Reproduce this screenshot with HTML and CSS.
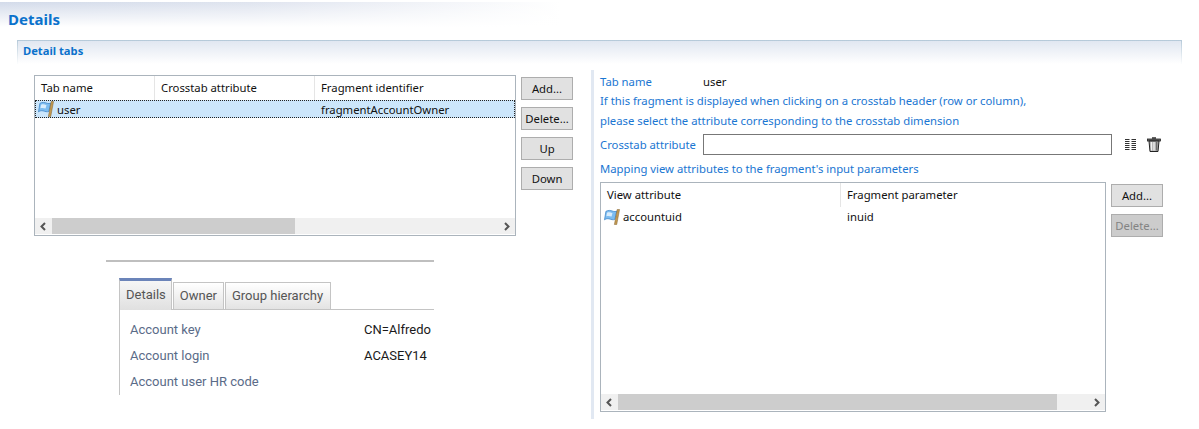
FILE: index.html
```html
<!DOCTYPE html>
<html lang="en">
<head>
<meta charset="utf-8">
<title>Details</title>
<link rel="stylesheet" href="styles.css">
</head>
<body>
<svg class="defs" width="0" height="0" aria-hidden="true">
  <symbol id="flag" viewBox="0 0 18 17">
    <path d="M2 2.5 C4.5 1 7 1.5 9 2.2 C11 3 12.5 2.8 13.5 2.2 L11.5 11 C9.5 12 7.5 11 5.5 10.5 C3.5 10 2 10.5 0.5 11.5 Z" fill="#7cbcf0" stroke="#3f86c8" stroke-width=".8"/>
    <path d="M3.2 4 C5 3 7 3.6 9 4.4 L8 8 C6 7.3 4.4 7 2.5 7.8 Z" fill="#d8ecfc"/>
    <path d="M14 0.5 L16.5 0.5 L13.5 16.5 L11 16.5 Z" fill="#c39a52" stroke="#7c5a24" stroke-width=".5"/>
  </symbol>
</svg>
<header class="title">Details</header>
<section class="section">
  <h2 class="section-head">Detail tabs</h2>
  <div class="content">
    <div class="left">
      <div class="left-top">
        <div class="grid grid-tabs">
          <div class="grid-head">
            <div class="col col-a">Tab name</div>
            <div class="col col-b">Crosstab attribute</div>
            <div class="col col-c">Fragment identifier</div>
          </div>
          <div class="grid-row selected">
            <div class="col col-a"><svg class="flag"><use href="#flag"/></svg>user</div>
            <div class="col col-b"></div>
            <div class="col col-c">fragmentAccountOwner</div>
          </div>
          <div class="grid-body"></div>
          <div class="hscroll">
            <span class="arrow">
              <svg width="9" height="9" viewBox="0 0 9 9"><path d="M6 1 L2.5 4.5 L6 8" fill="none" stroke="#555" stroke-width="2"/></svg>
            </span>
            <div class="track"><div class="thumb" style="width:243px"></div></div>
            <span class="arrow">
              <svg width="9" height="9" viewBox="0 0 9 9"><path d="M3 1 L6.5 4.5 L3 8" fill="none" stroke="#555" stroke-width="2"/></svg>
            </span>
          </div>
        </div>
        <div class="buttons buttons-tabs">
          <button class="btn">Add...</button>
          <button class="btn">Delete...</button>
          <button class="btn">Up</button>
          <button class="btn">Down</button>
        </div>
      </div>
      <div class="preview">
        <div class="preview-rule"></div>
        <div class="tabs">
          <div class="tab active">Details</div>
          <div class="tab">Owner</div>
          <div class="tab">Group hierarchy</div>
        </div>
        <dl class="props">
          <div class="prop"><dt>Account key</dt><dd>CN=Alfredo</dd></div>
          <div class="prop"><dt>Account login</dt><dd>ACASEY14</dd></div>
          <div class="prop"><dt>Account user HR code</dt><dd></dd></div>
        </dl>
      </div>
    </div>
    <div class="right">
      <div class="name-line"><span class="name-label">Tab name</span><span class="name-value">user</span></div>
      <p class="note note-first">If this fragment is displayed when clicking on a crosstab header (row or column),</p>
      <p class="note note-second">please select the attribute corresponding to the crosstab dimension</p>
      <div class="attr-line">
        <label class="attr-label">Crosstab attribute</label>
        <div class="attr-input"></div>
        <svg class="ic-cols" width="13" height="13" viewBox="0 0 13 13">
          <path d="M1 1.5H5.5M7.5 1.5H12M1 3.5H5.5M7.5 3.5H12M1 5.5H5.5M7.5 5.5H12M1 7.5H5.5M7.5 7.5H12M1 9.5H5.5M7.5 9.5H12M1 11.5H5.5M7.5 11.5H12" stroke="#333" stroke-width="1"/>
        </svg>
        <svg class="ic-trash" width="14" height="15" viewBox="0 0 14 15">
          <path d="M5 1 H9" stroke="#222" stroke-width="1.4" fill="none"/>
          <rect x="0.5" y="2" width="13" height="2" fill="#666" stroke="#222" stroke-width=".8"/>
          <path d="M2 4 H12 L11 14.5 H3 Z" fill="#b0b0b0" stroke="#222" stroke-width="1"/>
          <path d="M4.5 5 V13.5 M7 5 V13.5" stroke="#f2f2f2" stroke-width="1.3"/>
          <path d="M9.7 5 V13.5" stroke="#666" stroke-width="1.2"/>
        </svg>
      </div>
      <p class="note note-map">Mapping view attributes to the fragment's input parameters</p>
      <div class="map-line">
        <div class="grid grid-map">
          <div class="grid-head">
            <div class="col col-m1">View attribute</div>
            <div class="col col-m2">Fragment parameter</div>
          </div>
          <div class="grid-row">
            <div class="col col-m1"><svg class="flag"><use href="#flag"/></svg>accountuid</div>
            <div class="col col-m2">inuid</div>
          </div>
          <div class="grid-body"></div>
          <div class="hscroll">
            <span class="arrow">
              <svg width="9" height="9" viewBox="0 0 9 9"><path d="M6 1 L2.5 4.5 L6 8" fill="none" stroke="#555" stroke-width="2"/></svg>
            </span>
            <div class="track"><div class="thumb" style="width:439px"></div></div>
            <span class="arrow">
              <svg width="9" height="9" viewBox="0 0 9 9"><path d="M3 1 L6.5 4.5 L3 8" fill="none" stroke="#555" stroke-width="2"/></svg>
            </span>
          </div>
        </div>
        <div class="buttons buttons-map">
          <button class="btn">Add...</button>
          <button class="btn disabled">Delete...</button>
        </div>
      </div>
    </div>
  </div>
</section>
</body>
</html>
```
FILE: styles.css
```css
* { box-sizing: border-box; }
html, body { margin: 0; padding: 0; background: #fff; }
body {
  width: 1199px;
  height: 429px;
  overflow: hidden;
  font-family: "Noto Sans", "Open Sans", sans-serif;
  font-size: 11.3px;
  color: #111;
  padding-top: 2px;
}
.defs { display: block; height: 0; }
.title {
  height: 25px;
  padding: 8px 0 0 8px;
  font-size: 15px;
  line-height: 18px;
  font-weight: 700;
  color: #0b72cc;
  background:
    linear-gradient(to bottom, rgba(255,255,255,0) 0, #fff 100%),
    linear-gradient(to right, #d3dbea 0, #dfe4ef 250px, #fff 560px);
}
.section { margin: 13px 0 0 17px; width: 1165px; }
.section-head {
  margin: 0;
  height: 24px;
  padding: 2px 0 0 5px;
  font-size: 11.2px;
  line-height: 15px;
  font-weight: 700;
  color: #0b72cc;
  border: 1px solid #b5c9d9;
  border-bottom: 0;
  border-image: linear-gradient(to bottom, #b5c9d9, #fff) 1;
  background: linear-gradient(to bottom, #e1e7f1, #fff);
}
.content { display: flex; padding: 6px 0 0 17px; }
.left { width: 557px; padding-top: 5px; }
.left-top { display: flex; }
.grid {
  display: flex;
  flex-direction: column;
  border: 1px solid #abb4bc;
  background: #fff;
}
.grid-tabs { width: 482px; height: 161px; }
.grid-map { width: 506px; height: 230px; }
.grid-head { display: flex; height: 24px; flex: none; }
.grid-row { display: flex; height: 18px; flex: none; align-items: center; }
.grid-map .grid-head { height: 24px; }
.grid-map .grid-row { height: 19px; }
.grid-head .col { line-height: 22px; border-right: 1px solid #e5e5e5; }
.grid-head .col:last-child { border-right: 0; }
.col {
  padding-left: 6px;
  white-space: nowrap;
  display: flex;
  align-items: center;
  flex: none;
}
.col-a { width: 120px; }
.col-b { width: 160px; }
.col-c { flex: 1; }
.col-m1 { width: 240px; }
.col-m2 { flex: 1; }
.grid-row .col-a, .grid-row .col-m1 { padding-left: 3px; }
.selected {
  background: #cce6fb;
  outline: 1px dotted #222;
  outline-offset: -1px;
}
.flag { width: 17px; height: 16px; flex: none; margin-right: 2px; }
.grid-body { flex: 1; }
.hscroll {
  display: flex;
  height: 16px;
  flex: none;
  margin-bottom: 1px;
  background: #f0f0f0;
}
.arrow {
  width: 17px;
  flex: none;
  display: flex;
  align-items: center;
  justify-content: center;
}
.track { flex: 1; }
.thumb { height: 100%; background: #cdcdcd; }
.buttons { display: flex; flex-direction: column; gap: 7px; flex: none; }
.buttons-tabs { margin: 2px 0 0 5px; }
.buttons-map { margin: 2px 0 0 5px; }
.btn {
  width: 52px;
  height: 23px;
  padding: 0;
  border: 1px solid #adadad;
  background: #e1e1e1;
  font: inherit;
  color: #111;
}
.btn.disabled { background: #cccccc; color: #838383; }
.preview { margin: 24px 0 0 72px; width: 328px; }
.preview-rule { height: 2px; background: #bfbfbf; }
.tabs {
  display: flex;
  align-items: flex-end;
  margin: 16px 0 0 13px;
  height: 32px;
  font-family: Roboto, sans-serif;
  font-size: 13px;
  color: #555;
  gap: 1px;
  border-bottom: 1px solid #c4c4c4;
}
.tab {
  height: 28px;
  padding: 0 6px;
  margin-bottom: -1px;
  line-height: 25px;
  border: 1px solid #c4c4c4;
  background: linear-gradient(to bottom, #fff, #e3e3e3);
}
.tab:last-child { padding-right: 7px; }
.tab.active {
  height: 32px;
  padding: 0 5px 0 6px;
  line-height: 27px;
  border: 0;
  border-top: 3px solid #6b84b9;
  border-right: 1px solid #c4c4c4;
  border-left: 1px solid #c4c4c4;
  background: linear-gradient(to bottom, #f6f6f6, #e0e0e0);
}
.props {
  margin: 0 0 0 13px;
  height: 85px;
  padding: 7px 0 0 10px;
  border-left: 1px solid #c4c4c4;
  font-family: Roboto, sans-serif;
  font-size: 13px;
}
.prop { display: flex; height: 26px; line-height: 26px; }
.prop dt { width: 234px; color: #5a6b88; }
.prop dd { margin: 0; color: #1a1a1a; }
.right {
  width: 590px;
  height: 349px;
  margin-left: 0;
  padding: 3px 0 0 6px;
  border-left: 3px solid #e1e8f2;
  color: #1a76d2;
}
.name-line { display: flex; height: 18px; line-height: 18px; }
.name-label { width: 103px; }
.name-value { color: #111; }
.note { margin: 0; height: 20px; line-height: 20px; white-space: nowrap; }
.note-first { margin-top: 0; }
.attr-line { display: flex; align-items: center; height: 21px; margin-top: 3px; }
.attr-label { width: 103px; }
.attr-input { width: 409px; height: 21px; border: 1px solid #777; background: #fff; }
.ic-cols { margin-left: 12px; }
.ic-trash { margin-left: 10px; }
.note-map { margin-top: 4px; }
.map-line { display: flex; margin-top: 3px; }
.map-line .grid, .grid-row { color: #111; }
.grid-head { color: #111; }
```
